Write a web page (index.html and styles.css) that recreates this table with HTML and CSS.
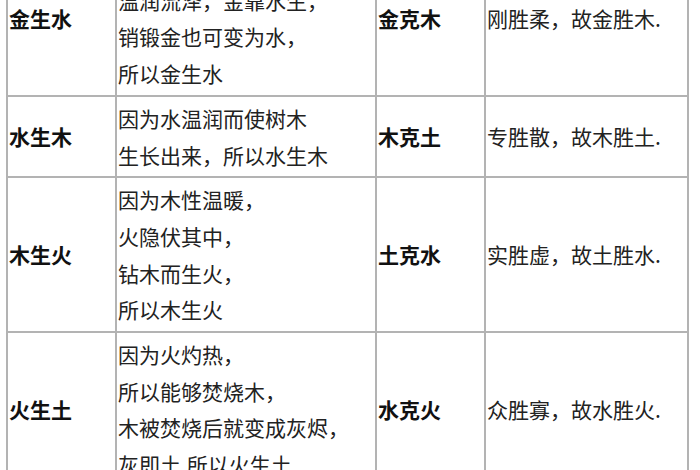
FILE: index.html
```html
<!DOCTYPE html>
<html lang="zh-CN">
<head>
<meta charset="utf-8">
<title>五行相生相克</title>
<link rel="stylesheet" href="styles.css">
</head>
<body>
<table class="wx">
  <colgroup>
    <col class="c1"><col class="c2"><col class="c3"><col class="c4">
  </colgroup>
  <tr>
    <td class="name">金生水</td>
    <td class="desc">因为少阴之气<br>温润流泽，金靠水生，<br>销锻金也可变为水，<br>所以金生水</td>
    <td class="name">金克木</td>
    <td class="note">刚胜柔，故金胜木.</td>
  </tr>
  <tr>
    <td class="name">水生木</td>
    <td class="desc">因为水温润而使树木<br>生长出来，所以水生木</td>
    <td class="name">木克土</td>
    <td class="note">专胜散，故木胜土.</td>
  </tr>
  <tr>
    <td class="name">木生火</td>
    <td class="desc">因为木性温暖，<br>火隐伏其中，<br>钻木而生火，<br>所以木生火</td>
    <td class="name">土克水</td>
    <td class="note">实胜虚，故土胜水.</td>
  </tr>
  <tr>
    <td class="name">火生土</td>
    <td class="desc">因为火灼热，<br>所以能够焚烧木，<br>木被焚烧后就变成灰烬，<br>灰即土,所以火生土</td>
    <td class="name">水克火</td>
    <td class="note">众胜寡，故水胜火.</td>
  </tr>
</table>
</body>
</html>
```

FILE: styles.css
```css
html, body {
  margin: 0;
  padding: 0;
  background: #ffffff;
  overflow: hidden;
}
body {
  width: 700px;
  height: 470px;
  font-family: "Noto Sans CJK SC", "Noto Sans", sans-serif;
  color: #141414;
}
.wx {
  border-collapse: collapse;
  table-layout: fixed;
  width: 683px;
  margin: -60px 0 0 6px;
}
.wx .c1 { width: 109px; }
.wx .c2 { width: 260px; }
.wx .c3 { width: 109px; }
.wx .c4 { width: 203px; }
.wx td {
  border: 2px solid #b3b3b3;
  padding: 3px 0 3px 1px;
  font-size: 21px;
  line-height: 36.7px;
  vertical-align: middle;
  white-space: nowrap;
  overflow: hidden;
}
.wx .name {
  font-weight: bold;
  color: #111111;
}
.wx .desc,
.wx .note {
  font-weight: normal;
  color: #222222;
}
```
